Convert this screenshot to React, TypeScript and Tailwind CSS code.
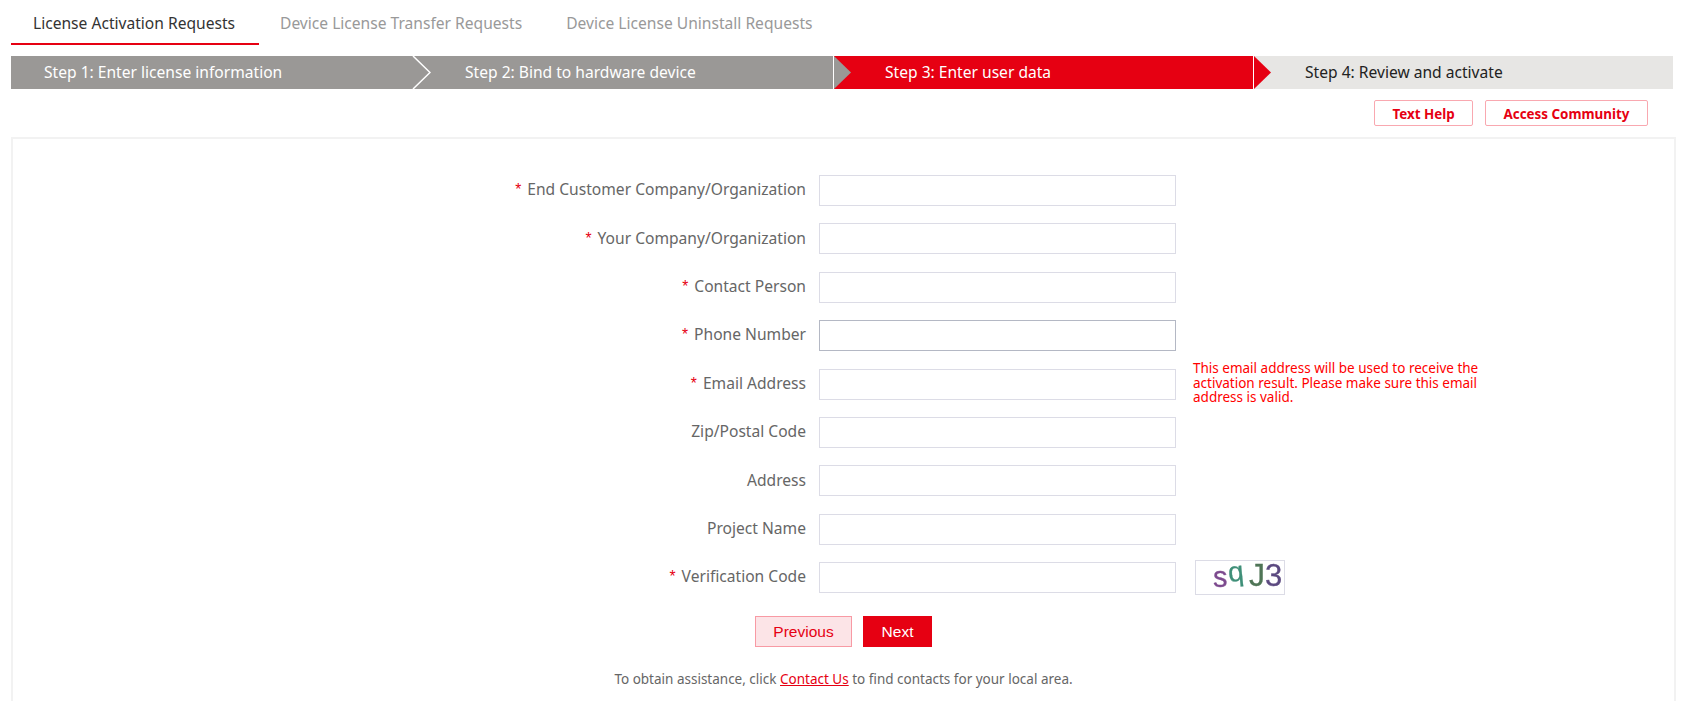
import React from 'react';

const steps = [
	{ label: 'Step 1: Enter license information', cls: 'w-[403px] pl-[33px] bg-[#9a9896] text-white' },
	{ label: 'Step 2: Bind to hardware device', cls: 'w-[420px] pl-[51px] bg-[#9a9896] text-white' },
	{ label: 'Step 3: Enter user data', cls: 'w-[420px] pl-[51px] bg-[#e60012] text-white' },
	{ label: 'Step 4: Review and activate', cls: 'flex-1 pl-[51px] bg-[#e7e6e4] text-[#222]' },
];

const fields = [
	{ label: 'End Customer Company/Organization', required: true },
	{ label: 'Your Company/Organization', required: true },
	{ label: 'Contact Person', required: true },
	{ label: 'Phone Number', required: true, focused: true },
	{ label: 'Email Address', required: true, note: true },
	{ label: 'Zip/Postal Code' },
	{ label: 'Address' },
	{ label: 'Project Name' },
	{ label: 'Verification Code', required: true, captcha: true },
];

function Captcha() {
	return (
		<div className="w-[90px] h-[35px] border border-[#dcdce6]">
			<svg viewBox="1 1 88 33" className="w-[88px] h-[33px] overflow-visible" style={{ fontFamily: '"Liberation Sans", sans-serif' }}>
				<g className="blur-[0.3px]" strokeWidth="0.3">
					<text x="18" y="27" fontSize="29" fill="#7c4a8e" stroke="#7c4a8e">s</text>
					<text x="34" y="22" fontSize="28" fill="#3f8f78" stroke="#3f8f78" transform="rotate(-6 34 22)">q</text>
					<text x="54" y="26" fontSize="32" fill="#4f7556" stroke="#4f7556">J</text>
					<text x="70" y="26" fontSize="31" fill="#5c4a80" stroke="#5c4a80">3</text>
				</g>
			</svg>
		</div>
	);
}

export default function App() {
	return (
		<div className="bg-white h-[701px] overflow-hidden pl-[11px] pr-[13px] font-['Noto_Sans',sans-serif]">
			{/* Tabs */}
			<div className="flex h-[45px] text-[15.6px]">
				<div className="w-[248px] pl-[22px] pt-[12px] border-b-2 border-[#e60012] text-[#333]">License Activation Requests</div>
				<div className="pl-[21px] pt-[12px] text-[#999]">Device License Transfer Requests</div>
				<div className="pl-[44px] pt-[12px] text-[#999]">Device License Uninstall Requests</div>
			</div>

			{/* Steps */}
			<div className="flex h-[33px] mt-[11px] text-[15.6px]">
				{steps.map((step, index) => (
					<div key={step.label} className={`relative flex items-center ${step.cls}`}>
						{step.label}
						{index === 0 && (
							<svg viewBox="0 0 19 33" className="absolute top-0 -right-[17px] w-[19px] h-[33px] z-10">
								<path d="M1 0 L18 16.5 L1 33" fill="none" stroke="#fff" strokeWidth="1.5" />
							</svg>
						)}
						{(index === 1 || index === 2) && (
							<svg viewBox="0 0 19 33" className="absolute top-0 -right-[18px] w-[19px] h-[33px] z-10">
								<path d="M1 0 L18 16.5 L1 33 Z" fill={index === 1 ? '#9a9896' : '#e60012'} />
								<path d="M0.5 0 V33" stroke="#fff" />
							</svg>
						)}
					</div>
				))}
			</div>

			{/* Help buttons */}
			<div className="flex justify-end gap-[12px] mt-[11px] pr-[25px] text-[13.4px] font-bold text-[#e60012]">
				<button className="w-[99px] h-[26px] pt-[4px] border border-[#f9a8b0] rounded-[2px] leading-none">Text Help</button>
				<button className="w-[163px] h-[26px] pt-[4px] border border-[#f9a8b0] rounded-[2px] leading-none">Access Community</button>
			</div>

			{/* Form panel */}
			<div className="mt-[11px] -mr-[3px] border-2 border-b-0 border-[#f2f2f2] h-[600px] pt-[36px]">
				<div className="flex flex-col gap-[17.4px]">
					{fields.map((field) => (
						<div key={field.label} className="flex items-center h-[31px]">
							<label className="w-[793px] pb-[1px] text-right text-[15.6px] text-[#666]">
								{field.required && <span className="font-['Liberation_Sans',sans-serif] text-[#e60012] mr-[6px]">*</span>}
								{field.label}
							</label>
							<input
								type="text"
								className={`ml-[13px] w-[357px] h-[31px] outline-none bg-white border ${field.focused ? 'border-[#b4b8c4]' : 'border-[#dcdce6]'}`}
							/>
							{field.note && (
								<p className="ml-[17px] -mt-[2px] w-[290px] text-[13.5px] leading-[14.5px] text-[#f00]">
									This email address will be used to receive the activation result. Please make sure this email address is valid.
								</p>
							)}
							{field.captcha && (
								<div className="ml-[19px]">
									<Captcha />
								</div>
							)}
						</div>
					))}
				</div>

				{/* Actions */}
				<div className="flex justify-center gap-[11px] mt-[23px] font-['Liberation_Sans',sans-serif] text-[15.5px]">
					<button className="w-[97px] h-[31px] bg-[#fce4e7] border border-[#f89aa4] text-[#e60012]">Previous</button>
					<button className="w-[69px] h-[31px] bg-[#e60012] text-white">Next</button>
				</div>

				<p className="mt-[22px] text-center text-[13.5px] text-[#666]">
					To obtain assistance, click <a href="#" className="text-[#e60012] underline">Contact Us</a> to find contacts for your local area.
				</p>
			</div>
		</div>
	);
}
